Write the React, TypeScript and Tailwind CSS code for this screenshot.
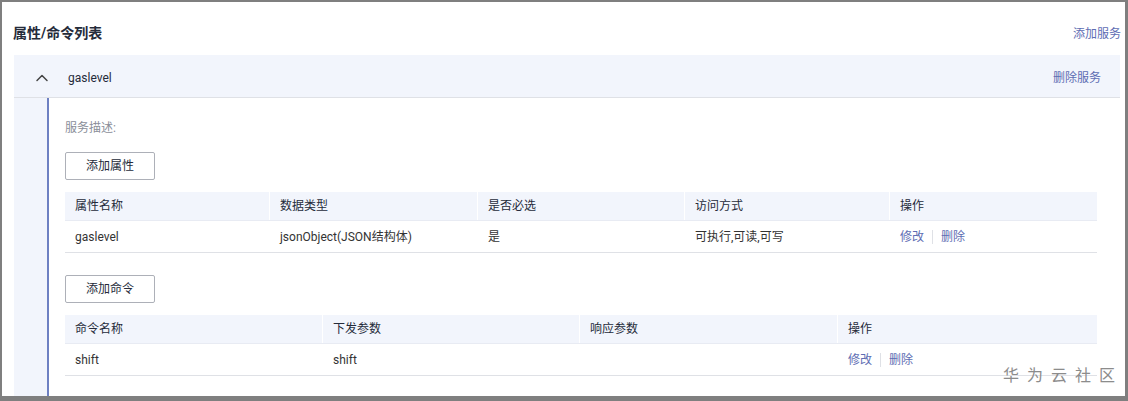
import { ChevronUp } from 'lucide-react';

type Col = { title: string; width: string };

const propCols: Col[] = [
  { title: '属性名称', width: 'w-[205px]' },
  { title: '数据类型', width: 'w-[208px]' },
  { title: '是否必选', width: 'w-[207px]' },
  { title: '访问方式', width: 'w-[205px]' },
  { title: '操作', width: 'flex-1' },
];

const cmdCols: Col[] = [
  { title: '命令名称', width: 'w-[258px]' },
  { title: '下发参数', width: 'w-[257px]' },
  { title: '响应参数', width: 'w-[258px]' },
  { title: '操作', width: 'flex-1' },
];

function Actions() {
  return (
    <div className="flex items-center text-[#5e6db3]">
      <span>修改</span>
      <span className="mx-2 h-[14px] w-px bg-[#dfe1e6]" />
      <span>删除</span>
    </div>
  );
}

function Table({ cols, row }: { cols: Col[]; row: (string | null)[] }) {
  return (
    <div className="w-[1032px] text-[12px]">
      <div className="flex h-[28px] bg-[#f2f5fc] text-[#252b3a]">
        {cols.map((c, i) => (
          <div
            key={c.title}
            className={`${c.width} flex items-center px-[10px] ${i < cols.length - 1 ? 'border-r border-white' : ''}`}
          >
            {c.title}
          </div>
        ))}
      </div>
      <div className="flex h-[33px] border-y border-[#dfe1e6] border-t-[#e8ebf3] text-[#333]">
        {cols.map((c, i) => (
          <div key={c.title} className={`${c.width} flex items-center px-[10px] pt-px`}>
            {row[i] === null ? <Actions /> : row[i]}
          </div>
        ))}
      </div>
    </div>
  );
}

function OutlineButton({ label }: { label: string }) {
  return (
    <button className="flex h-[28px] w-[90px] items-center justify-center rounded-[2px] border border-[#adb0b8] bg-white text-[12px] text-[#252b3a]">
      {label}
    </button>
  );
}

export default function App() {
  return (
    <div
      className="relative h-[401px] w-[1128px] overflow-hidden border-t-2 border-r-[3px] border-b-[5px] border-l-2 border-[#7f7f7f] bg-white"
      style={{ fontFamily: 'Roboto, "Noto Sans CJK SC", sans-serif' }}
    >
      <div className="flex h-[53px] items-center justify-between pt-[10px] pl-[11px] pr-[4px]">
        <h2 className="text-[14px] font-bold text-[#252b3a]">属性/命令列表</h2>
        <span className="text-[12px] text-[#5e6db3]">添加服务</span>
      </div>
      <div className="ml-[12px] w-[1106px]">
        <div className="flex h-[43px] items-center justify-between border-b border-[#dfe1e6] bg-[#f2f5fc] pt-[4px] pr-[19px]">
          <div className="flex items-center">
            <ChevronUp className="ml-[18px] h-[20px] w-[20px] text-[#444]" strokeWidth={1.8} />
            <span className="ml-[16px] text-[12px] text-[#252b3a]">gaslevel</span>
          </div>
          <span className="text-[12px] text-[#5e6db3]">删除服务</span>
        </div>
        <div className="flex h-[300px]">
          <div className="w-[33px] bg-[#f2f5fc]" />
          <div className="w-[2px] bg-[#6e80c2]" />
          <div className="flex flex-1 flex-col pl-[16px]">
            <div className="mt-[21px] text-[12px] text-[#8a8e99]">服务描述:</div>
            <div className="mt-[15px]">
              <OutlineButton label="添加属性" />
            </div>
            <div className="mt-[12px]">
              <Table cols={propCols} row={['gaslevel', 'jsonObject(JSON结构体)', '是', '可执行,可读,可写', null]} />
            </div>
            <div className="mt-[22px]">
              <OutlineButton label="添加命令" />
            </div>
            <div className="mt-[12px]">
              <Table cols={cmdCols} row={['shift', 'shift', '', null]} />
            </div>
          </div>
        </div>
      </div>
      <div className="absolute bottom-[8px] right-[2px] text-[16px] tracking-[8px] text-[#8c8c8c]">华为云社区</div>
    </div>
  );
}
